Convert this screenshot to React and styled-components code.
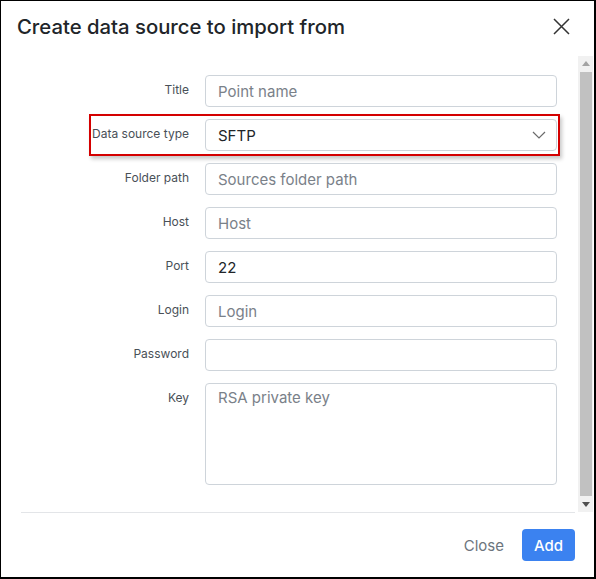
import React from "react";
import styled, { createGlobalStyle } from "styled-components";

const Global = createGlobalStyle`
  html, body { margin: 0; padding: 0; background: #fff; }
  body { font-family: Inter, "Noto Sans", Arial, sans-serif; }
  * { box-sizing: border-box; }
`;

const Frame = styled.div`
  width: 596px;
  height: 579px;
  border-style: solid;
  border-color: #000;
  border-width: 1px 2px 2px 1px;
  background: #fff;
  display: flex;
  flex-direction: column;
`;

const Header = styled.div`
  height: 55px;
  flex: none;
  display: flex;
  align-items: center;
  justify-content: space-between;
  padding: 0 24px 4px 16px;
`;

const Title = styled.h1`
  margin: 0;
  font-size: 20.3px;
  font-weight: 500;
  color: #212529;
`;

const CloseX = styled.button`
  border: 0;
  background: none;
  padding: 0;
  width: 17px;
  height: 17px;
  display: flex;
  align-items: center;
  justify-content: center;
  cursor: pointer;
`;

const BodyWrap = styled.div`
  height: 456px;
  flex: none;
  display: flex;
  padding-right: 1px;
`;

const Body = styled.div`
  flex: 1;
  overflow: hidden;
  padding: 19px 21px 32px 0;
  display: flex;
  flex-direction: column;
  gap: 12px;
`;

const Scrollbar = styled.div`
  width: 15px;
  flex: none;
  background: #f1f1f1;
  display: flex;
  flex-direction: column;
`;

const ScrollArrow = styled.div`
  height: 15px;
  flex: none;
  display: flex;
  align-items: center;
  justify-content: center;
  padding-left: 1px;
`;

const Thumb = styled.div`
  flex: 1;
  margin: 1px 1px 1px 2px;
  background: #c1c1c1;
`;

const Row = styled.div`
  position: relative;
  display: grid;
  grid-template-columns: 188px 1fr;
  column-gap: 16px;
  align-items: start;
`;

const Label = styled.label`
  text-align: right;
  font-size: 12px;
  line-height: 18px;
  padding-top: 6px;
  color: #495057;
`;

const fieldBase = `
  width: 100%;
  border: 1px solid #ced4da;
  border-radius: 4px;
  font-family: Inter, "Noto Sans", Arial, sans-serif;
  font-size: 15px;
  color: #212529;
  background: #fff;
  outline: none;
  &::placeholder { color: #7a8189; }
`;

const Input = styled.input`
  ${fieldBase}
  height: 32px;
  padding: 0 12px;
`;

const TextArea = styled.textarea`
  ${fieldBase}
  height: 102px;
  padding: 3px 12px;
  resize: none;
  line-height: 22px;
`;

const SelectBox = styled.div`
  ${fieldBase}
  height: 32px;
  padding: 0 10px 0 12px;
  display: flex;
  align-items: center;
  justify-content: space-between;
`;

const Highlight = styled.div`
  position: absolute;
  top: -5px;
  left: 88px;
  right: -3px;
  bottom: -5px;
  border: 2px solid #d40000;
  box-shadow: 2px 3px 4px rgba(0, 0, 0, 0.22);
  pointer-events: none;
`;

const Footer = styled.div`
  flex: 1;
  margin: 0 19px 0 20px;
  border-top: 1px solid #e3e5e8;
  display: flex;
  justify-content: flex-end;
  align-items: flex-start;
  padding-top: 16px;
  gap: 12px;
`;

const Button = styled.button`
  height: 32px;
  border-radius: 4px;
  border: 0;
  font-family: Inter, "Noto Sans", Arial, sans-serif;
  font-size: 15px;
  padding: 0 ${(p) => (p.$primary ? "12px" : "6px")};
  background: ${(p) => (p.$primary ? "#3b82f0" : "transparent")};
  color: ${(p) => (p.$primary ? "#fff" : "#6c757d")};
  font-weight: ${(p) => (p.$primary ? 500 : 400)};
  cursor: pointer;
`;

const fields = [
  { label: "Title", placeholder: "Point name" },
  { label: "Data source type", select: "SFTP", highlight: true },
  { label: "Folder path", placeholder: "Sources folder path" },
  { label: "Host", placeholder: "Host" },
  { label: "Port", value: "22" },
  { label: "Login", placeholder: "Login" },
  { label: "Password", placeholder: "", type: "password" },
  { label: "Key", placeholder: "RSA private key", area: true },
];

export default function App() {
  return (
    <>
      <Global />
      <Frame>
        <Header>
          <Title>Create data source to import from</Title>
          <CloseX aria-label="Close">
            <svg width="17" height="17" viewBox="0 0 17 17">
              <path d="M1 1 L16 16 M16 1 L1 16" stroke="#333" strokeWidth="1.5" fill="none" />
            </svg>
          </CloseX>
        </Header>
        <BodyWrap>
          <Body>
            {fields.map((f) => (
              <Row key={f.label}>
                <Label>{f.label}</Label>
                {f.select ? (
                  <SelectBox>
                    <span>{f.select}</span>
                    <svg width="14" height="8" viewBox="0 0 14 8">
                      <path d="M1 1 L7 7 L13 1" stroke="#6b6b6b" strokeWidth="1.2" fill="none" />
                    </svg>
                  </SelectBox>
                ) : f.area ? (
                  <TextArea placeholder={f.placeholder} />
                ) : (
                  <Input type={f.type || "text"} placeholder={f.placeholder} defaultValue={f.value} />
                )}
                {f.highlight && <Highlight />}
              </Row>
            ))}
          </Body>
          <Scrollbar aria-hidden="true">
            <ScrollArrow>
              <svg width="8" height="5" viewBox="0 0 8 5">
                <path d="M0 5 L4 0 L8 5 Z" fill="#a3a3a3" />
              </svg>
            </ScrollArrow>
            <Thumb />
            <ScrollArrow>
              <svg width="8" height="5" viewBox="0 0 8 5">
                <path d="M0 0 L8 0 L4 5 Z" fill="#505050" />
              </svg>
            </ScrollArrow>
          </Scrollbar>
        </BodyWrap>
        <Footer>
          <Button>Close</Button>
          <Button $primary>Add</Button>
        </Footer>
      </Frame>
    </>
  );
}
